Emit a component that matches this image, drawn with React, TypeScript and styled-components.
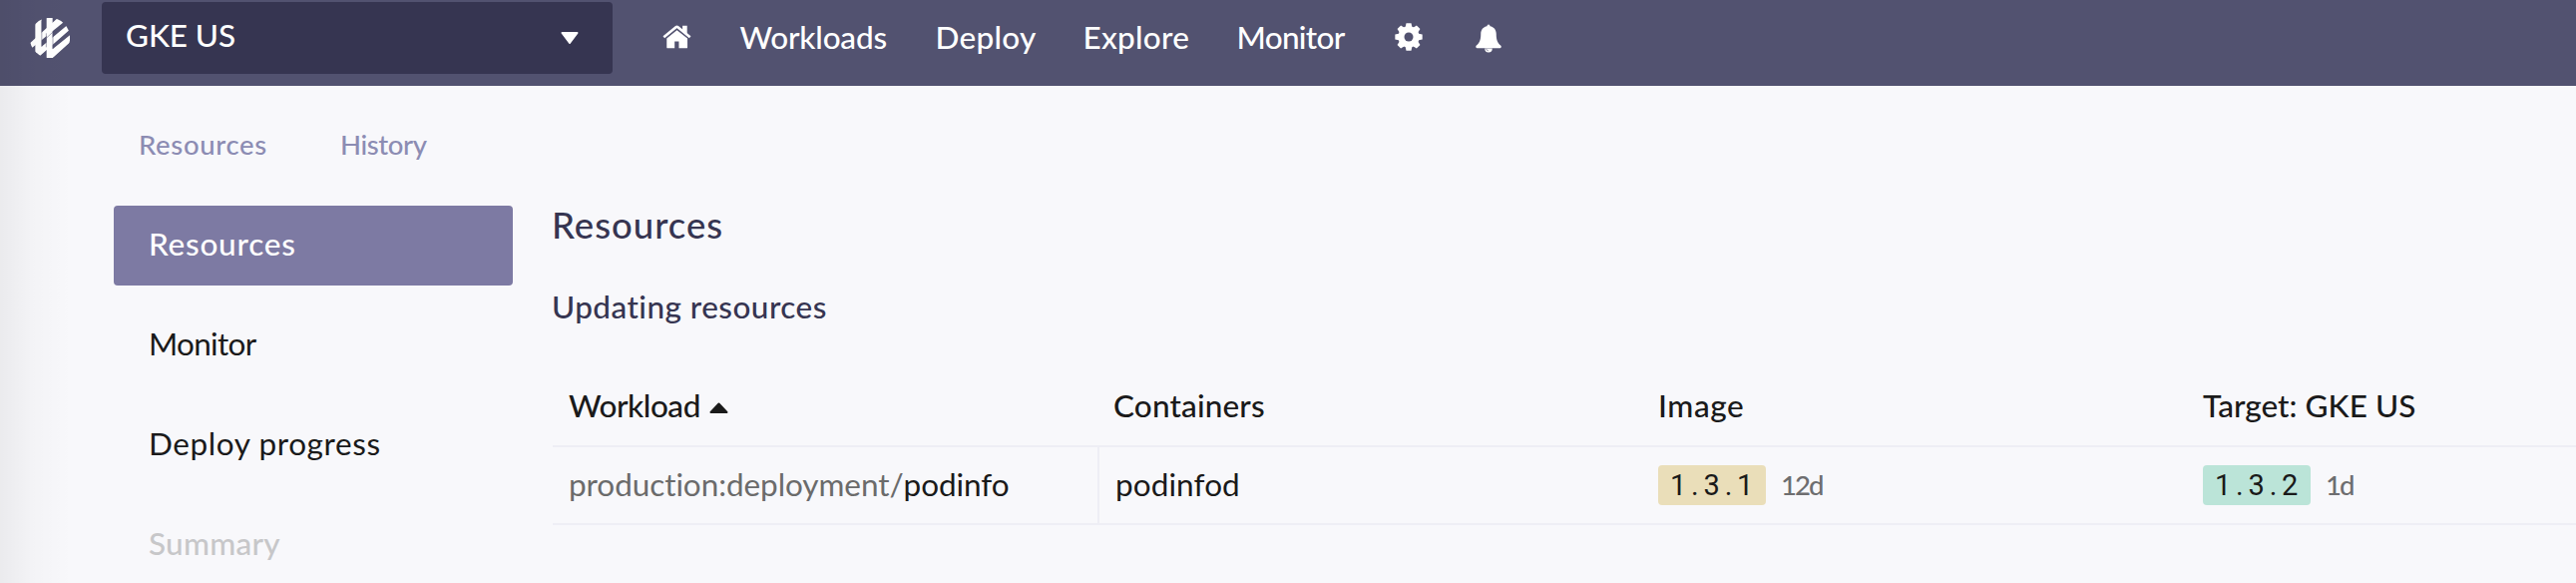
import React from 'react';
import styled, { createGlobalStyle } from 'styled-components';

const GlobalStyle = createGlobalStyle`
  * { box-sizing: border-box; }
  html, body { margin: 0; height: 100%; overflow: hidden; background: #f8f8fb; }
  body { font-family: Lato, 'Open Sans', sans-serif; font-size: 31.5px; font-variant-ligatures: none; color: #1a1a1a; }
`;

const Page = styled.div`
  position: relative;
  height: 584px;
  overflow: hidden;
  background: #f8f8fb;
`;

const EdgeShadow = styled.div`
  position: absolute;
  inset: 0 auto 0 0;
  width: 72px;
  background: linear-gradient(to right, rgba(0, 0, 0, 0.055), rgba(0, 0, 0, 0.02) 45%, rgba(0, 0, 0, 0));
  pointer-events: none;
`;

const Navbar = styled.header`
  display: flex;
  align-items: flex-start;
  height: 86px;
  padding-left: 30px;
  background: #525270;
  color: #fff;
`;

const Logo = styled.svg`
  width: 40px;
  height: 40px;
  margin: 18px 32px 0 0;
`;

const InstanceSelect = styled.div`
  display: flex;
  align-items: center;
  justify-content: space-between;
  width: 512px;
  height: 72px;
  margin-top: 2px;
  padding: 0 34px 0 24px;
  border-radius: 4px;
  background: #363551;
`;

const SelectLabel = styled.span`
  padding-bottom: 7px;
  font-weight: 500;
  letter-spacing: -0.1px;
`;

const Menu = styled.nav`
  display: flex;
  align-items: center;
  height: 72px;
  margin-left: 50px;
`;

const MenuLink = styled.a<{ $spacing: number; $width: number }>`
  width: ${(p) => p.$width}px;
  padding-top: 1px;
  font-weight: 500;
  white-space: nowrap;
  letter-spacing: ${(p) => p.$spacing}px;
`;

const HomeIcon = styled.svg`
  width: 29px;
  height: 24px;
  margin-top: 1px;
  margin-right: 48.5px;
`;

const CogIcon = styled.svg`
  width: 28px;
  height: 28px;
  margin-top: 1px;
  margin-right: 53px;
`;

const BellIcon = styled.svg`
  width: 26px;
  height: 29px;
  margin-top: 4px;
`;

const Tabs = styled.div`
  display: flex;
  align-items: center;
  height: 120px;
  padding: 0 0 4px 139px;
  font-size: 27.5px;
  font-weight: 500;
  color: #8c8cb3;
`;

const Tab = styled.a<{ $spacing: number; $width: number }>`
  width: ${(p) => p.$width}px;
  letter-spacing: ${(p) => p.$spacing}px;
`;

const Body = styled.div`
  display: flex;
  padding-left: 114px;
`;

const Sidebar = styled.aside`
  display: flex;
  flex: none;
  flex-direction: column;
  gap: 20px;
  width: 400px;
  margin-right: 39px;
`;

const SidebarItem = styled.a<{ $state?: 'active' | 'disabled'; $spacing: number }>`
  display: flex;
  align-items: center;
  height: 80px;
  padding: 0 0 4px 35px;
  border-radius: 4px;
  letter-spacing: ${(p) => p.$spacing}px;
  font-weight: ${(p) => (p.$state ? 500 : 400)};
  color: ${(p) => (p.$state === 'active' ? '#fff' : p.$state === 'disabled' ? '#c7c7c9' : '#1a1a1a')};
  background: ${(p) => (p.$state === 'active' ? '#7d7aa3' : 'transparent')};
`;

const Main = styled.main`
  flex: none;
  width: 2185px;
`;

const Title = styled.h1`
  margin: 0;
  font-size: 36.5px;
  line-height: 39px;
  font-weight: 500;
  letter-spacing: 1px;
  color: #363551;
`;

const Subtitle = styled.h2`
  margin: 42px 0 39px;
  font-size: 31.5px;
  line-height: 40px;
  font-weight: 500;
  letter-spacing: 0.45px;
  color: #363551;
`;

const Table = styled.div`
  margin-left: 1px;
`;

const Row = styled.div<{ $head?: boolean }>`
  display: grid;
  grid-template-columns: repeat(4, 546px);
  height: ${(p) => (p.$head ? 82 : 78)}px;
  border-bottom: 2px solid #eeeef5;
  font-weight: ${(p) => (p.$head ? 500 : 400)};
`;

const Cell = styled.div<{ $divider?: boolean; $spacing?: number; $lift?: number }>`
  display: flex;
  align-items: center;
  padding: 0 16px ${(p) => p.$lift ?? 0}px;
  border-left: ${(p) => (p.$divider ? '2px solid #eeeef5' : 'none')};
  letter-spacing: ${(p) => p.$spacing ?? 0}px;
  white-space: nowrap;
`;

const SortArrow = styled.svg`
  width: 19px;
  height: 11px;
  margin: 4px 0 0 9px;
`;

const Muted = styled.span`
  color: #6b6b6b;
`;

const Version = styled.span<{ $tone: 'old' | 'new' }>`
  width: 108px;
  height: 40px;
  padding-left: 12px;
  border-radius: 4px;
  font: 400 29px/41px Roboto, sans-serif;
  letter-spacing: 4.8px;
  background: ${(p) => (p.$tone === 'old' ? '#eadeb9' : '#bbe4d8')};
`;

const Age = styled.span`
  margin: 0 0 1px 15px;
  font-size: 27.5px;
  font-weight: 500;
  letter-spacing: -1.9px;
  color: #6e6e70;
`;

const TOOTH_ANGLES = [0, 45, 90, 135];

export default function App() {
  return (
    <Page>
      <GlobalStyle />
      <Navbar>
        <Logo viewBox="12 12 120 120">
          <clipPath id="disc"><circle cx="72" cy="72" r="60.5" /></clipPath>
          <g clipPath="url(#disc)" fill="#fff">
            <path d="M8 91 100 8 114 24 18 102Z" />
            <path d="M28 10H47V98L124 34 130 49 42 126 28 114Z" />
            <path d="M62 8H80V106L134 62V84L76 136H62Z" />
            <path d="M61 58V100M47.500 20V98M81 52V104" stroke="#525270" strokeWidth="1.500" fill="none" />
            <path d="M62 72 80 55" stroke="#525270" strokeWidth="1.500" />
          </g>
        </Logo>
        <InstanceSelect>
          <SelectLabel>GKE US</SelectLabel>
          <svg width="18" height="12" viewBox="0 0 18 12">
            <path d="M1.500 1H16.500L9 11Z" fill="#fff" stroke="#fff" strokeWidth="2" strokeLinejoin="round" />
          </svg>
        </InstanceSelect>
        <Menu>
          <HomeIcon viewBox="71 74 88 71" fill="#fff">
            <path d="M75 110 112 80Q115 77.500 118 80L155 110" fill="none" stroke="#fff" strokeWidth="8" />
            <path d="M132 75H146V101L132 90Z" />
            <path d="M84 114 115 89 147 114V141Q147 144 144 144H121V123H108V144H87Q84 144 84 141Z" />
          </HomeIcon>
          <MenuLink $spacing={-0.2} $width={196}>Workloads</MenuLink>
          <MenuLink $spacing={0.3} $width={148}>Deploy</MenuLink>
          <MenuLink $spacing={0.25} $width={154}>Explore</MenuLink>
          <MenuLink $spacing={-0.7} $width={158}>Monitor</MenuLink>
          <CogIcon viewBox="-42 -42 84 84">
            {TOOTH_ANGLES.map((a) => (
              <path key={a} d="M-10 -30-7.500 -41H7.500L10 -30V30L7.500 41H-7.500L-10 30Z" fill="#fff" transform={`rotate(${a})`} />
            ))}
            <circle r="32" fill="#fff" />
            <circle r="13.500" fill="#525270" />
          </CogIcon>
          <BellIcon viewBox="294 71 79 87">
            <path
              d="M333.500 72Q338 72 338 77C350 79 357 88 357 101 357 121 362 130 372 137V141Q371 144 368 144H299Q296 144 295 141V137C305 130 310 121 310 101 310 88 317 79 329 77Q329 72 333.500 72Z"
              fill="#fff"
            />
            <path d="M322 145H345A11.500 12 0 0 1 322 145Z" fill="#fff" />
            <path d="M326 146Q327 151 333 152" stroke="#525270" strokeWidth="1.800" fill="none" />
          </BellIcon>
        </Menu>
      </Navbar>
      <Tabs>
        <Tab $spacing={0.65} $width={202}>Resources</Tab>
        <Tab $spacing={-0.4} $width={100}>History</Tab>
      </Tabs>
      <Body>
        <Sidebar>
          <SidebarItem $state="active" $spacing={0.75}>Resources</SidebarItem>
          <SidebarItem $spacing={-0.7}>Monitor</SidebarItem>
          <SidebarItem $spacing={0.6}>Deploy progress</SidebarItem>
          <SidebarItem $state="disabled" $spacing={0.25}>Summary</SidebarItem>
        </Sidebar>
        <Main>
          <Title>Resources</Title>
          <Subtitle>Updating resources</Subtitle>
          <Table>
            <Row $head>
              <Cell $spacing={-0.45}>
                Workload
                <SortArrow viewBox="0 0 19 11">
                  <path d="M1.500 10 9.500 1.500 17.500 10Z" fill="#1a1a1a" stroke="#1a1a1a" strokeWidth="2" strokeLinejoin="round" />
                </SortArrow>
              </Cell>
              <Cell $spacing={0.15}>Containers</Cell>
              <Cell $spacing={0.6}>Image</Cell>
              <Cell $spacing={0.05}>Target: GKE US</Cell>
            </Row>
            <Row>
              <Cell $lift={3} $spacing={-0.07}><Muted>production:deployment/</Muted>podinfo</Cell>
              <Cell $divider $lift={3} $spacing={0.1}>podinfod</Cell>
              <Cell><Version $tone="old">1.3.1</Version><Age>12d</Age></Cell>
              <Cell><Version $tone="new">1.3.2</Version><Age>1d</Age></Cell>
            </Row>
          </Table>
        </Main>
      </Body>
      <EdgeShadow />
    </Page>
  );
}
